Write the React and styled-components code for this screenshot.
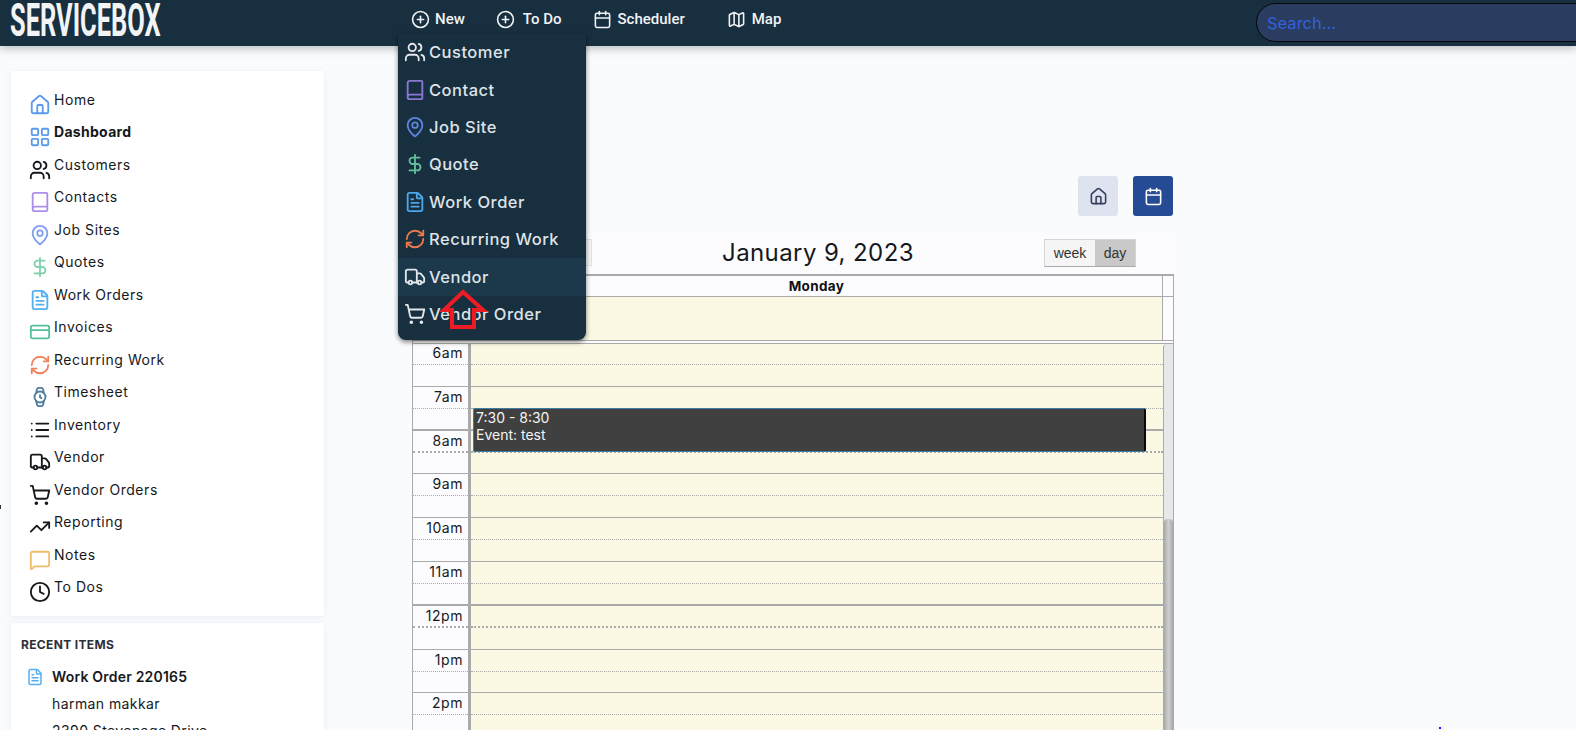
import React from "react";
import styled, { createGlobalStyle } from "styled-components";
import {
  Home, LayoutGrid, Users, Book, MapPin, DollarSign, FileText, CreditCard, RefreshCw,
  Watch, List, Truck, ShoppingCart, TrendingUp, MessageSquare, Clock, CirclePlus, Calendar, Map as MapIcon,
} from "lucide-react";

const Global = createGlobalStyle`
  html, body { margin: 0; padding: 0; background: #fff; }
  body { font-family: Inter, "Liberation Sans", sans-serif; color: #111; }
  * { box-sizing: border-box; }
`;

const Page = styled.div`
  position: relative;
  height: 730px;
  overflow: hidden;
  background: #fafbfd;
`;

const Header = styled.header`
  position: relative;
  z-index: 5;
  height: 46px;
  background: #182f40;
  display: flex;
  align-items: center;
  padding-left: 10px;
  box-shadow: 0 3px 8px rgba(30, 50, 70, 0.28);
`;

const LogoBox = styled.div`
  width: 152px;
  height: 46px;
  display: flex;
  align-items: center;
`;

const Logo = styled.span`
  display: inline-block;
  flex: none;
  width: max-content;
  font-family: "Roboto", sans-serif;
  font-weight: 700;
  font-size: 46px;
  line-height: 46px;
  color: #f2f4f5;
  transform: scaleX(0.553);
  transform-origin: left center;
  white-space: nowrap;
  margin-top: -6px;
`;

const Nav = styled.nav`
  display: flex;
  align-items: center;
  margin-left: 249px;
`;

const NavItem = styled.div`
  display: flex;
  align-items: center;
  gap: ${(p) => p.$gap}px;
  margin-left: ${(p) => p.$ml || 0}px;
  font-family: Roboto, sans-serif;
  font-weight: 500;
  font-size: 15px;
  color: #f1f3f5;
  margin-top: -8px;
  svg { flex: none; }
`;

const SearchWrap = styled.div`
  margin-left: auto;
  width: 320px;
  overflow: hidden;
  height: 46px;
  display: flex;
  align-items: center;
`;

const SearchBox = styled.div`
  flex: none;
  width: 360px;
  height: 39px;
  margin-top: -2px;
  padding: 1px 0 0 10px;
  background: #2a3c5f;
  border: 1px solid #05070a;
  border-radius: 20px;
  display: flex;
  align-items: center;
  font-size: 16.5px;
  color: #3361dc;
`;

const Menu = styled.div`
  position: absolute;
  left: 398px;
  top: 34px;
  width: 188px;
  height: 306px;
  background: #182f40;
  border-radius: 0 0 8px 8px;
  box-shadow: 0 2px 5px rgba(0, 0, 0, 0.5);
`;

const MenuRow = styled.div`
  height: 37.4px;
  display: flex;
  align-items: center;
  padding-left: 6px;
  padding-bottom: 1px;
  gap: 3px;
  font-size: 16.5px;
  font-weight: 500;
  letter-spacing: 0.5px;
  color: #dfe3e7;
  background: ${(p) => (p.$active ? "#1b394b" : "transparent")};
  svg { flex: none; width: 22px; height: 22px; }
`;

const ArrowMark = styled.svg`
  position: absolute;
  left: 42px;
  top: 255px;
`;

const Body = styled.main`
  display: flex;
  align-items: flex-start;
  padding: 25px 0 0 11px;
  gap: 88px;
`;

const Side = styled.aside`
  width: 313px;
  display: flex;
  flex-direction: column;
  gap: 7px;
`;

const Card = styled.section`
  background: #fff;
  box-shadow: 0 1px 6px rgba(120, 135, 190, 0.12);
  padding: ${(p) => p.$pad};
`;

const SideRow = styled.div`
  height: 32.47px;
  display: flex;
  align-items: flex-start;
  gap: 3px;
  font-size: 14px;
  line-height: 20px;
  letter-spacing: ${(p) => (p.$bold ? "0.3px" : "0.55px")};
  font-weight: ${(p) => (p.$bold ? 700 : 400)};
  color: #16181c;
  svg { flex: none; width: 22px; height: 22px; margin-top: 4px; }
`;

const RecentTitle = styled.div`
  font-size: 12px;
  font-weight: 700;
  color: #2c2f36;
  letter-spacing: 0.35px;
  line-height: 16px;
  margin-bottom: 14px;
`;

const RecentRow = styled.div`
  display: flex;
  align-items: center;
  gap: 8px;
  font-size: 14px;
  font-weight: 600;
  letter-spacing: 0.2px;
  line-height: 20px;
  padding-left: 5px;
  color: #16181c;
  svg { flex: none; width: 18px; height: 18px; }
`;

const RecentLine = styled.div`
  font-size: 14px;
  letter-spacing: 0.42px;
  line-height: 27px;
  padding-left: 31px;
  color: #16181c;
  margin-top: ${(p) => p.$mt || 0}px;
`;

const Column = styled.div`
  width: 762px;
  padding-top: 105px;
  display: flex;
  flex-direction: column;
`;

const Actions = styled.div`
  display: flex;
  justify-content: flex-end;
  gap: 15px;
  padding-right: 1px;
`;

const ActionButton = styled.div`
  width: 40px;
  height: 40px;
  border-radius: 3px;
  display: flex;
  align-items: center;
  justify-content: center;
  background: ${(p) => (p.$primary ? "#244b94" : "#dfe3f0")};
  color: ${(p) => (p.$primary ? "#fff" : "#37405a")};
`;

const Toolbar = styled.div`
  margin-top: 21px;
  height: 37px;
  padding: 2px 38px 0 0;
  display: flex;
  align-items: flex-start;
  justify-content: space-between;
  background: #fcfcfe;
`;

const GhostButton = styled.div`
  width: 180px;
  height: 27px;
  background: #f5f5f5;
  border: 1px solid #e2e2e2;
`;

const Title = styled.h2`
  margin: 0;
  font-size: 24px;
  font-weight: 400;
  letter-spacing: 0.4px;
  line-height: 27px;
  color: #16181c;
`;

const Toggle = styled.div`
  display: flex;
  width: 92px;
  height: 28px;
  border: 1px solid #d5d5d5;
  border-bottom-color: #aaa;
  font-family: "Liberation Sans", sans-serif;
  font-size: 14px;
`;

const ToggleItem = styled.div`
  flex: ${(p) => (p.$on ? "0 0 40px" : "1")};
  display: flex;
  align-items: center;
  justify-content: center;
  background: ${(p) => (p.$on ? "#c9c9c9" : "#f5f5f5")};
  color: #333;
`;

const Grid = styled.div`
  border: 1px solid #aaa;
  border-top-width: 2px;
  border-bottom: 0;
  background: #fcfcfe;
`;

const HeadRow = styled.div`
  height: 21px;
  display: grid;
  grid-template-columns: 1fr 10px;
  border-bottom: 1px solid #aaa;
`;

const DayName = styled.div`
  text-align: center;
  font-size: 13.5px;
  font-weight: 700;
  letter-spacing: 0.35px;
  line-height: 20px;
  border-right: 1px solid #aaa;
  padding-left: 58px;
`;

const AllDayRow = styled.div`
  height: 44px;
  display: grid;
  grid-template-columns: 58px 1fr 10px;
  border-bottom: 1px solid #aaa;
`;

const AllDayCell = styled.div`
  background: #fbf8e4;
  border-right: 1px solid #aaa;
`;

const Scroller = styled.div`
  margin-top: 2px;
  border-top: 1px solid #aaa;
  height: 420px;
  display: grid;
  grid-template-columns: 1fr 10px;
`;

const Hours = styled.div`
  position: relative;
  overflow: hidden;
`;

const HourStack = styled.div`
  margin-top: -1px;
`;

const HourRow = styled.div`
  height: 43.8px;
  display: grid;
  grid-template-columns: 58px 1fr;
  border-bottom: ${(p) => (p.$heavy ? "2px" : "1px")} solid #aaa;
`;

const HourLabel = styled.div`
  font-size: 14px;
  letter-spacing: 0.55px;
  line-height: 20px;
  text-align: right;
  color: #16181c;
  border-right: 3px solid #aaa;
`;

const HalfLine = styled.div`
  height: 22px;
  padding-right: 5px;
  border-bottom: ${(p) => (p.$heavy ? "2px dotted #aaa" : "1px dotted #aaa")};
`;

const HourCell = styled.div`
  background: #fbf8e4;
  height: 100%;
`;

const Event = styled.div`
  position: absolute;
  left: 60px;
  top: 64px;
  width: 673px;
  height: 44px;
  padding: 0 2px;
  background: #404040;
  border: 1px solid #3a7ea6;
  border-right: 2px solid #0a0a0a;
  border-radius: 2px;
  color: #f4f4f4;
  font-size: 14px;
  line-height: 17px;
`;

const Track = styled.div`
  display: flex;
  flex-direction: column;
  background: #e7e8ea;
  border-left: 1px solid #aaa;
  border-top-left-radius: 4px;
`;

const Thumb = styled.div`
  margin-top: 175px;
  flex: 1;
  border-radius: 4px 4px 0 0;
  background: linear-gradient(90deg, #a9a9a9, #cfcfd2 50%, #a9a9a9);
`;

const Speck = styled.span`
  position: absolute;
  left: ${(p) => p.$x}px;
  top: ${(p) => p.$y}px;
  width: ${(p) => p.$w}px;
  height: ${(p) => p.$h}px;
  background: ${(p) => p.$c};
`;

const sideItems = [
  ["Home", Home, "#5b9bea"],
  ["Dashboard", LayoutGrid, "#5b9bea", true],
  ["Customers", Users, "#16181c"],
  ["Contacts", Book, "#ab8fe8"],
  ["Job Sites", MapPin, "#7f9fec"],
  ["Quotes", DollarSign, "#7fd0ad"],
  ["Work Orders", FileText, "#55aef0"],
  ["Invoices", CreditCard, "#58bf9c"],
  ["Recurring Work", RefreshCw, "#f0835c"],
  ["Timesheet", Watch, "#4f7d9c"],
  ["Inventory", List, "#16181c"],
  ["Vendor", Truck, "#16181c"],
  ["Vendor Orders", ShoppingCart, "#16181c"],
  ["Reporting", TrendingUp, "#16181c"],
  ["Notes", MessageSquare, "#f0bd6a"],
  ["To Dos", Clock, "#16181c"],
];

const menuItems = [
  ["Customer", Users, "#e4e7ea"],
  ["Contact", Book, "#8a78d8"],
  ["Job Site", MapPin, "#5b86e0"],
  ["Quote", DollarSign, "#63c09c"],
  ["Work Order", FileText, "#4ea6ec"],
  ["Recurring Work", RefreshCw, "#ec7a4c"],
  ["Vendor", Truck, "#e4e7ea", true],
  ["Vendor Order", ShoppingCart, "#e4e7ea"],
];

const hours = [
  ["6am"], ["7am"], ["8am", true], ["9am"], ["10am"], ["11am"], ["12pm", true], ["1pm"], ["2pm"],
];

export default function App() {
  return (
    <Page>
      <Global />
      <Header>
        <LogoBox><Logo>SERVICEBOX</Logo></LogoBox>
        <Nav>
          <NavItem $gap={5}><CirclePlus size={19} />New</NavItem>
          <NavItem $ml={31} $gap={8}><CirclePlus size={19} />To Do</NavItem>
          <NavItem $ml={32} $gap={5}><Calendar size={19} />Scheduler</NavItem>
          <NavItem $ml={42} $gap={6}><MapIcon size={19} />Map</NavItem>
        </Nav>
        <SearchWrap><SearchBox>Search...</SearchBox></SearchWrap>
        <Menu>
          {menuItems.map(([label, Icon, color, active]) => (
            <MenuRow key={label} $active={active}>
              <Icon color={color} strokeWidth={2} />
              {label}
            </MenuRow>
          ))}
          <ArrowMark width="48" height="42" viewBox="0 0 48 42">
            <path d="M23 3 L4 21 H12 V38 H34 V21 H43 Z" fill="none" stroke="#ed1c24" strokeWidth="4" />
          </ArrowMark>
        </Menu>
      </Header>

      <Body>
        <Side>
          <Card $pad="19px 0 6px 18px">
            {sideItems.map(([label, Icon, color, bold]) => (
              <SideRow key={label} $bold={bold}>
                <Icon color={color} strokeWidth={2} />
                {label}
              </SideRow>
            ))}
          </Card>
          <Card $pad="14px 0 0 10px">
            <RecentTitle>RECENT ITEMS</RecentTitle>
            <RecentRow><FileText color="#55aef0" />Work Order 220165</RecentRow>
            <RecentLine $mt={3}>harman makkar</RecentLine>
            <RecentLine>2390 Stevenage Drive</RecentLine>
          </Card>
        </Side>

        <Column>
          <Actions>
            <ActionButton><Home size={19} /></ActionButton>
            <ActionButton $primary><Calendar size={19} /></ActionButton>
          </Actions>
          <Toolbar>
            <GhostButton />
            <Title>January 9, 2023</Title>
            <Toggle>
              <ToggleItem>week</ToggleItem>
              <ToggleItem $on>day</ToggleItem>
            </Toggle>
          </Toolbar>
          <Grid>
            <HeadRow>
              <DayName>Monday</DayName>
              <div />
            </HeadRow>
            <AllDayRow>
              <div />
              <AllDayCell />
              <div />
            </AllDayRow>
            <Scroller>
              <Hours>
                <HourStack>
                  {hours.map(([label, heavy]) => (
                    <HourRow key={label} $heavy={label === "7am" || label === "11am"}>
                      <HourLabel>
                        <HalfLine $heavy={heavy}>{label}</HalfLine>
                      </HourLabel>
                      <HourCell>
                        <HalfLine $heavy={heavy} />
                      </HourCell>
                    </HourRow>
                  ))}
                </HourStack>
                <Event>7:30 - 8:30<br />Event: test</Event>
              </Hours>
              <Track><Thumb /></Track>
            </Scroller>
          </Grid>
        </Column>
      </Body>
      <Speck $x={0} $y={505} $w={1} $h={4} $c="#333" />
      <Speck $x={1439} $y={727} $w={2} $h={2} $c="#1a1aff" />
    </Page>
  );
}
